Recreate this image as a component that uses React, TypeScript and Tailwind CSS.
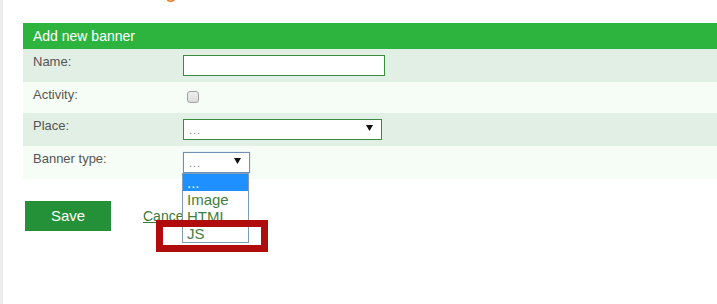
import React from 'react';

function Arrow() {
  return (
    <svg width="7" height="6" viewBox="0 0 7 6" className="shrink-0">
      <path d="M0 0 H7 L3.5 6 Z" fill="#111" />
    </svg>
  );
}

function FakeSelect({ width, focused, children }: { width: string; focused?: boolean; children?: React.ReactNode }) {
  return (
    <div
      className={`relative flex h-[21px] items-end justify-between bg-white pl-[5px] pr-[8px] pb-[3px] ${width} ${
        focused ? 'border border-[#6f8fb8] shadow-[0_0_1px_#9fc0e6]' : 'border border-[#3a8a40]'
      }`}
    >
      <span className="text-[11px] leading-[11px] text-[#6f8f6f] tracking-[1px]">...</span>
      <div className="mb-[5px]">
        <Arrow />
      </div>
      {children}
    </div>
  );
}

export default function App() {
  const types = ['...', 'Image', 'HTML', 'JS'];

  return (
    <div className="relative flex min-h-[304px] bg-white font-['Liberation_Sans',Arial,sans-serif]">
      <div className="w-[3px] shrink-0 bg-[#ededed]" />
      <div className="flex flex-1 flex-col pl-5">
        <div className="h-[23px] overflow-hidden">
          <h1 className="-mt-[21px] ml-[10px] text-[22px] leading-[22px] text-[#ef7b1c]">Banner management</h1>
        </div>

        <div className="flex flex-col">
          <div className="h-[26px] bg-[#2cb43e] pl-[10px] text-[14px] leading-[26px] text-white">Add new banner</div>

          <div className="grid h-[33px] grid-cols-[160px_1fr] bg-[#e1efe4]">
            <div className="pl-[10px] pt-[5px] text-[13px] leading-[15px] text-[#555]">Name:</div>
            <div className="pt-[6px]">
              <div className="h-[21px] w-[202px] border border-[#3a8a40] bg-white" />
            </div>
          </div>

          <div className="grid h-[31px] grid-cols-[160px_1fr] bg-[#f6fdf6]">
            <div className="pl-[10px] pt-[5px] text-[13px] leading-[15px] text-[#555]">Activity:</div>
            <div className="pl-[4px] pt-[9px]">
              <div className="h-[12px] w-[12px] rounded-[3px] border border-[#a0a0a0] bg-gradient-to-b from-[#eeeeee] to-[#dcdcdc]" />
            </div>
          </div>

          <div className="grid h-[33px] grid-cols-[160px_1fr] bg-[#e1efe4]">
            <div className="pl-[10px] pt-[5px] text-[13px] leading-[15px] text-[#555]">Place:</div>
            <div className="pt-[6px]">
              <FakeSelect width="w-[199px]" />
            </div>
          </div>

          <div className="grid h-[33px] grid-cols-[160px_1fr] bg-[#f6fdf6]">
            <div className="pl-[10px] pt-[5px] text-[13px] leading-[15px] text-[#555]">Banner type:</div>
            <div className="pt-[6px]">
              <FakeSelect width="w-[67px]" focused>
                <ul className="absolute left-[-2px] top-[20px] z-10 w-[67px] border border-[#7f9db9] bg-white">
                  {types.map((t, i) => (
                    <li
                      key={t}
                      className={`h-[17px] pl-[4px] text-[15px] leading-[17px] ${
                        i === 0 ? 'bg-[#1e90ff] text-white' : 'text-[#3f7f3f]'
                      }`}
                    >
                      {t}
                    </li>
                  ))}
                </ul>
              </FakeSelect>
            </div>
          </div>
        </div>

        <div className="mt-[22px] flex items-center gap-[32px] pl-[2px]">
          <button className="h-[30px] w-[86px] bg-[#249139] text-[15px] text-white">Save</button>
          <a href="#" className="text-[14px] text-[#3a7a3a] underline">Cancel</a>
        </div>
      </div>

      <div className="absolute left-[156px] top-[220px] z-20 h-[32px] w-[112px] border-[7px] border-[#b00c0c]" />
    </div>
  );
}
